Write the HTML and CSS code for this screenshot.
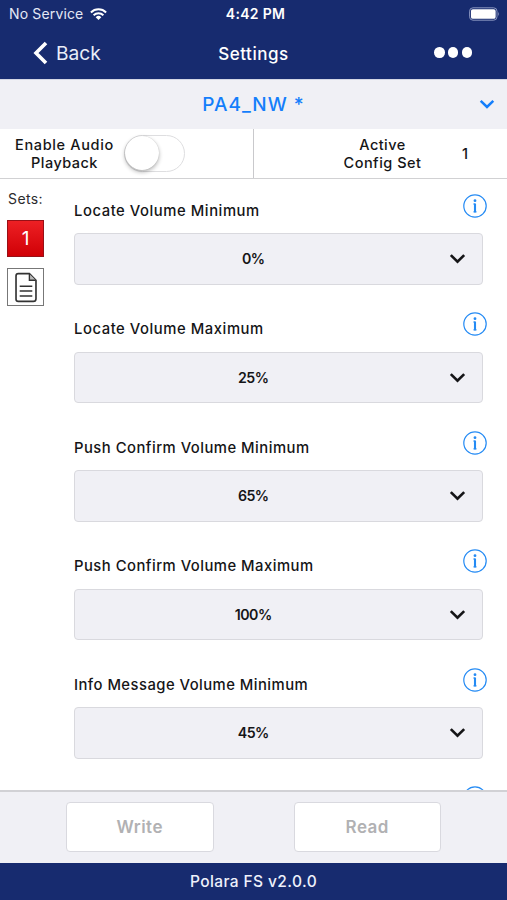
FILE: index.html
```html
<!DOCTYPE html>
<html lang="en">
<head>
<meta charset="utf-8">
<title>Settings</title>
<link rel="stylesheet" href="styles.css">
</head>
<body>
<svg class="defs" width="0" height="0" aria-hidden="true">
  <symbol id="chevron" viewBox="0 0 16 10"><path d="M1.7 1.8 8 8l6.3-6.2" fill="none" stroke="currentColor" stroke-width="2.5"/></symbol>
  <symbol id="info" viewBox="0 0 24 24"><circle cx="12" cy="12" r="11.200" fill="none" stroke="currentColor" stroke-width="1.200"/><circle cx="12" cy="6.700" r="1.400" fill="currentColor"/><path d="M10.300 10h1.700M10.400 17.900h3.200" fill="none" stroke="currentColor" stroke-width="1"/><path d="M12 9.500v8.900" stroke="currentColor" stroke-width="2.100"/></symbol>
</svg>
<div class="app">
  <header class="top">
    <div class="status">
      <div class="carrier"><span class="service">No Service</span>
        <svg class="wifi" viewBox="0 0 17 12"><g fill="none" stroke="#fff" stroke-width="2"><path d="M.9 4.5a10.8 10.8 0 0 1 15.2 0"/><path d="M3.6 7.3a7 7 0 0 1 9.8 0"/></g><path d="M8.5 12 5.7 9.2a4 4 0 0 1 5.6 0z" fill="#fff"/></svg>
      </div>
      <span class="time">4:42 PM</span>
      <svg class="battery" viewBox="0 0 32 14"><rect x=".6" y=".6" width="28.3" height="12.8" rx="3.5" fill="none" stroke="#8d99c2"/><rect x="2" y="2" width="25.5" height="10" rx="2" fill="#fff"/><path d="M30.2 4.7q1.8 2.3 0 4.6z" fill="#8d99c2"/></svg>
    </div>
    <nav class="nav">
      <div class="back"><svg viewBox="0 0 15 24"><path d="M13 2 3 12l10 10" fill="none" stroke="#fff" stroke-width="3.6"/></svg><span>Back</span></div>
      <h1 class="title">Settings</h1>
      <div class="more"><i></i><i></i><i></i></div>
    </nav>
  </header>
  <div class="device"><span class="device-name">PA4_NW *</span><svg class="device-arrow"><use href="#chevron"/></svg></div>
  <section class="options">
    <div class="audio"><p><span class="l1">Enable Audio</span><br><span class="l2">Playback</span></p><div class="toggle"><i></i></div></div>
    <div class="config"><p><span class="l3">Active</span><br><span class="l4">Config Set</span></p><b>1</b></div>
  </section>
  <main class="content">
    <aside class="sets">
      <span class="sets-label">Sets:</span>
      <div class="set">1</div>
      <div class="doc"><svg viewBox="0 0 24 32"><path d="M4 1.7h11.5l6.8 6.8v19q0 2.8-2.800 2.800H4q-2.300 0-2.300-2.300V4Q1.700 1.700 4 1.700z" fill="none" stroke="#333" stroke-width="1.700"/><path d="M15.500 2v6.500h6.500" fill="#bbb" stroke="#333" stroke-width="1.400"/><path d="M5.500 14.700h13M5.500 19.700h13M5.500 24.700h13" stroke="#333" stroke-width="1.600"/></svg></div>
    </aside>
    <div class="fields">
      <div class="field"><div class="head"><span class="label f1">Locate Volume Minimum</span><svg><use href="#info"/></svg></div><div class="select"><span>0%</span><svg><use href="#chevron"/></svg></div></div>
      <div class="field"><div class="head"><span class="label f2">Locate Volume Maximum</span><svg><use href="#info"/></svg></div><div class="select"><span>25%</span><svg><use href="#chevron"/></svg></div></div>
      <div class="field"><div class="head"><span class="label f3">Push Confirm Volume Minimum</span><svg><use href="#info"/></svg></div><div class="select"><span>65%</span><svg><use href="#chevron"/></svg></div></div>
      <div class="field"><div class="head"><span class="label f4">Push Confirm Volume Maximum</span><svg><use href="#info"/></svg></div><div class="select"><span>100%</span><svg><use href="#chevron"/></svg></div></div>
      <div class="field"><div class="head"><span class="label f5">Info Message Volume Minimum</span><svg><use href="#info"/></svg></div><div class="select"><span>45%</span><svg><use href="#chevron"/></svg></div></div>
      <div class="field"><div class="head"><span class="label"></span><svg><use href="#info"/></svg></div></div>
    </div>
  </main>
  <div class="actions"><div class="button write"><span>Write</span></div><div class="button read"><span>Read</span></div></div>
  <footer class="version"><span>Polara FS v2.0.0</span></footer>
</div>
</body>
</html>
```

FILE: styles.css
```css
* { box-sizing: border-box; }
body { margin: 0; font-family: Inter, "Liberation Sans", sans-serif; font-weight: 500; color: #151517; background: #fff; }
svg { display: block; flex: none; }
.defs { position: absolute; }
p, h1 { margin: 0; }
.app { width: 507px; height: 900px; display: flex; flex-direction: column; overflow: hidden; }
.top { height: 79px; flex: none; background: #172b6f; color: #fff; }
.status { height: 27px; display: grid; grid-template-columns: 1fr auto 1fr; align-items: center; padding: 0 7px 0 9px; }
.carrier { display: flex; align-items: center; gap: 7px; font-size: 14px; font-weight: 400; color: #e4e8f5; }
.service { letter-spacing: .15px; }
.wifi { width: 17px; height: 12px; }
.time { font-size: 14px; font-weight: 600; letter-spacing: .3px; padding-left: 2px; }
.battery { width: 31px; height: 14px; justify-self: end; }
.nav { height: 52px; display: grid; grid-template-columns: 1fr auto 1fr; align-items: center; padding: 0 35px 0 33px; }
.back { display: flex; align-items: center; gap: 8px; font-size: 19.2px; font-weight: 400; color: #e9edf8; }
.back svg { width: 15px; height: 24px; margin-top: -1px; }
.back span { margin-top: -1px; }
.title { font-size: 17px; font-weight: 500; letter-spacing: .55px; padding: 2px 0 0 2px; }
.more { display: flex; gap: 3.2px; justify-self: end; margin-top: -1px; }
.more i { width: 10.4px; height: 10.4px; border-radius: 50%; background: #fff; }
.device { height: 50px; flex: none; background: #f0f0f5; border-top: 1px solid #d3d6e4; display: grid; grid-template-columns: 1fr auto 1fr; align-items: center; padding: 0 12px; color: #147efb; }
.device-name { grid-column: 2; font-size: 19px; font-weight: 500; letter-spacing: 1px; }
.device-arrow { width: 16px; height: 10px; justify-self: end; margin-top: -2px; }
.options { height: 50px; flex: none; display: flex; border-bottom: 1.5px solid #d1d1d3; font-size: 14.5px; line-height: 17.5px; text-align: center; }
.audio { width: 254px; border-right: 1.5px solid #c9c9cc; display: flex; align-items: center; padding-left: 15px; gap: 10px; }
.audio p { width: 99px; white-space: nowrap; }
.l1 { letter-spacing: .65px; }
.l2, .l3 { letter-spacing: .45px; }
.l4 { letter-spacing: .5px; }
.toggle { width: 61px; height: 37px; border: 1.5px solid #dedee0; border-radius: 19px; }
.toggle i { display: block; width: 34px; height: 34px; border-radius: 50%; background: #fff; box-shadow: 0 2px 4px rgba(0,0,0,.3), 0 0 1px rgba(0,0,0,.2); }
.config { flex: 1; display: flex; align-items: center; padding-left: 89px; }
.config p { width: 79px; white-space: nowrap; }
.config b { font-weight: 500; margin-left: 40px; }
.content { flex: 1; min-height: 0; overflow: hidden; display: flex; }
.sets { width: 74px; padding: 10px 0 0 7px; }
.sets-label { display: block; height: 20px; line-height: 20px; font-size: 14px; font-weight: 400; letter-spacing: .4px; padding-left: 1px; color: #2b2b2d; }
.set { width: 37px; height: 37px; margin-top: 11px; border: 1px solid #981016; background: linear-gradient(#ed2024, #d00006); color: #fff; font-size: 19px; font-weight: 400; line-height: 36px; text-align: center; }
.doc { width: 37px; height: 38px; margin-top: 11px; border: 1px solid #777; display: flex; align-items: center; justify-content: center; }
.doc svg { width: 24px; height: 31px; }
.fields { width: 412.5px; padding-top: 14.5px; }
.field { height: 118.5px; }
.head { height: 39.5px; display: flex; justify-content: space-between; color: #258bf4; }
.head svg { width: 24px; height: 24px; }
.label { font-size: 14.8px; line-height: 34px; color: #151517; white-space: nowrap; }
.f1, .f2 { letter-spacing: .56px; }
.f3, .f4 { letter-spacing: .49px; }
.f5 { letter-spacing: .47px; }
.select { width: 408.5px; height: 51.5px; background: #f0f0f5; border: 1.5px solid #d9d9de; border-radius: 4px; display: grid; grid-template-columns: 1fr auto 1fr; align-items: center; padding: 0 16px 0 0; }
.select span { grid-column: 2; font-size: 14.2px; font-weight: 600; letter-spacing: -.5px; padding-right: 34px; }
.select svg { width: 17px; height: 11px; justify-self: end; }
.actions { height: 73px; flex: none; background: #f0f0f5; border-top: 2px solid #d1d1d5; display: flex; gap: 80px; padding: 10px 0 0 66px; }
.button { width: 147.5px; height: 50px; background: #fff; border: 1.5px solid #d9d9df; border-radius: 4px; color: #b1b1b3; font-size: 17px; font-weight: 600; letter-spacing: .5px; display: flex; align-items: center; justify-content: center; }
.version { height: 37px; flex: none; background: #172b6f; color: #eef1fb; font-size: 15.5px; letter-spacing: .4px; text-align: center; line-height: 38px; }
```
